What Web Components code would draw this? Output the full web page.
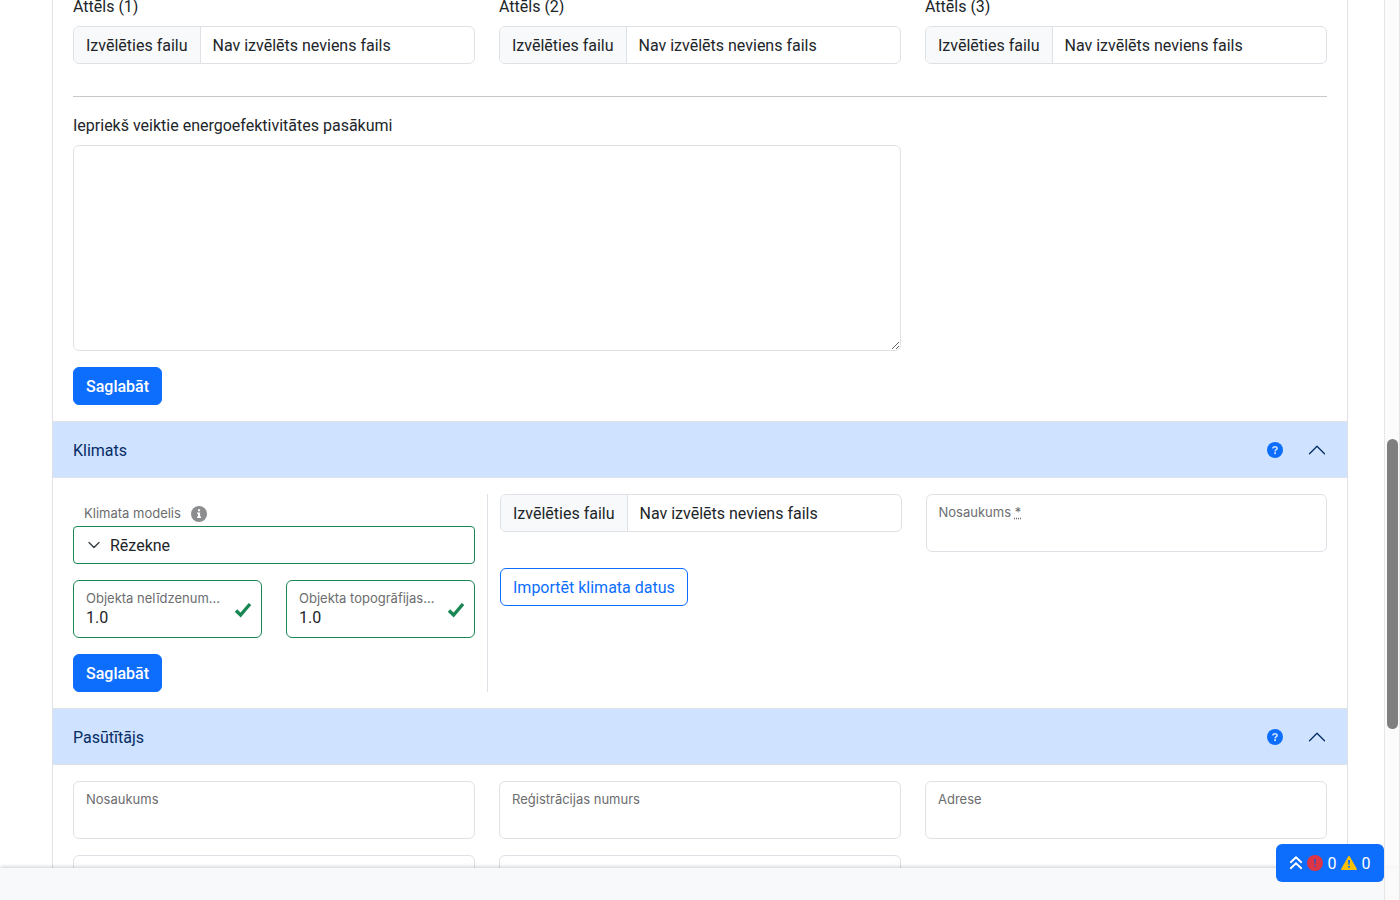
<!DOCTYPE html>
<html lang="lv">
<head>
<meta charset="UTF-8">
<meta name="viewport" content="width=device-width, initial-scale=1">
<title>Objekts</title>
<style>
    :root {
        --primary: #0d6efd;
        --success: #198754;
        --border: #dee2e6;
        --text: #212529;
        --muted: #6c6d6f;
        --small-font: Inter, Roboto, "Liberation Sans", sans-serif;
        --control-padding: 7px 12px 5px;
    }

    html, body {
        height: 100%;
    }

    body {
        margin: 0;
        overflow: hidden;
        color: var(--text);
        background: #fff;
        font: 16px/24px Roboto, "Liberation Sans", sans-serif;
    }
</style>
</head>
<body>
<app-shell>
    <panel-section>
        <form-grid>
            <file-field label="Attēls (1)"></file-field>
            <file-field label="Attēls (2)"></file-field>
            <file-field label="Attēls (3)"></file-field>
        </form-grid>
        <line-break></line-break>
        <form-grid>
            <text-area-field class="wide" label="Iepriekš veiktie energoefektivitātes pasākumi"></text-area-field>
        </form-grid>
        <action-button>Saglabāt</action-button>
    </panel-section>
    <panel-section heading="Klimats">
        <climate-form></climate-form>
    </panel-section>
    <panel-section heading="Pasūtītājs">
        <form-grid>
            <text-field label="Nosaukums"></text-field>
            <text-field label="Reģistrācijas numurs"></text-field>
            <text-field label="Adrese"></text-field>
            <text-field name="contact"></text-field>
            <text-field name="phone"></text-field>
        </form-grid>
    </panel-section>
    <status-button slot="status" errors="0" warnings="0"></status-button>
</app-shell>

<script>
// Shared by every element: open shadow root filled from a template
class BaseElement extends HTMLElement {
    constructor() {
        super();
        this.attachShadow({ mode: 'open' });
    }

    connectedCallback() {
        const template = document.createElement('template');
        template.innerHTML = `<style>* { box-sizing: border-box; }</style>` + this.render();
        this.shadowRoot.replaceChildren(template.content.cloneNode(true));
        this.ready();
    }

    ready() {}
}

class AppShell extends BaseElement {
    render() {
        return `
            <style>
                :host {
                    display: flex;
                    flex-direction: column;
                    height: 100vh;
                }

                main {
                    flex: 1;
                    min-height: 0;
                    overflow-y: auto;
                    scrollbar-width: none;
                }

                .container {
                    max-width: 1320px;
                    margin: 0 auto;
                    padding: 0 12px;
                    box-sizing: border-box;
                }

                .accordion {
                    border: 1px solid var(--border);
                    border-top: 0;
                }

                footer {
                    position: relative;
                    height: 32px;
                    background: #f8f9fa;
                    box-shadow: 0 -1px 4px rgba(0, 0, 0, 0.2);
                }

                .status {
                    position: fixed;
                    right: 16px;
                    bottom: 18px;
                    z-index: 2;
                }

                .track {
                    position: fixed;
                    top: 0;
                    right: 0;
                    bottom: 0;
                    width: 16px;
                    border: solid #e6e6e6;
                    border-width: 0 1px;
                    background: rgba(250, 250, 250, 0.85);
                }

                .thumb {
                    position: absolute;
                    top: 439px;
                    left: 2px;
                    width: 11px;
                    height: 290px;
                    border-radius: 6px;
                    background: #7f7f7f;
                }
            </style>
            <main>
                <div class="container"><div class="accordion"><slot></slot></div></div>
            </main>
            <footer></footer>
            <div class="track"><div class="thumb"></div></div>
            <div class="status"><slot name="status"></slot></div>
        `;
    }

    ready() {
        requestAnimationFrame(() => {
            this.shadowRoot.querySelector('main').scrollTop = 22;
        });
    }
}

class PanelSection extends BaseElement {
    render() {
        const heading = this.getAttribute('heading');
        const header = heading ? `
            <header>
                <button class="title" type="button" aria-expanded="true">${heading}</button>
                <a href="#help" aria-label="Palīdzība">
                    <svg width="16" height="16" viewBox="0 0 16 16">
                        <circle cx="8" cy="8" r="8" fill="#0d6efd"/>
                        <path d="M5.9 6.4C5.9 4.1 10.1 4.1 10.1 6.4C10.1 7.7 8.1 7.6 8.1 9.4" fill="none" stroke="#cfe2ff" stroke-width="1.6"/>
                        <rect x="7.2" y="10.3" width="1.8" height="1.8" fill="#cfe2ff"/>
                    </svg>
                </a>
                <button class="toggle" type="button" aria-label="Sakļaut">
                    <svg width="20" height="20" viewBox="0 0 16 16" fill="none" stroke="#052c65" stroke-linecap="round" stroke-linejoin="round">
                        <path d="M2 11L8 5L14 11"/>
                    </svg>
                </button>
            </header>` : '';
        return `
            <style>
                :host {
                    display: block;
                }

                header {
                    display: flex;
                    align-items: center;
                    gap: 24px;
                    padding: 0 20px;
                    border-top: 1px solid var(--border);
                    background: #cfe2ff;
                    box-shadow: inset 0 -1px 0 var(--border);
                }

                button {
                    padding: 0;
                    border: 0;
                    background: none;
                    color: #052c65;
                    font: inherit;
                    text-align: left;
                    cursor: pointer;
                }

                .title {
                    flex: 1;
                    padding: 17px 0 15px;
                }

                svg {
                    display: block;
                }

                .body {
                    padding: 16px 20px;
                }

                .body[hidden] {
                    display: none;
                }
            </style>
            ${header}
            <div class="body"><slot></slot></div>
        `;
    }

    ready() {
        this.shadowRoot.querySelectorAll('button').forEach((button) => {
            button.addEventListener('click', () => this.toggle());
        });
    }

    toggle() {
        const body = this.shadowRoot.querySelector('.body');
        body.hidden = !body.hidden;
        this.shadowRoot.querySelector('.title').setAttribute('aria-expanded', String(!body.hidden));
    }
}

class FormGrid extends BaseElement {
    render() {
        return `
            <style>
                :host {
                    display: grid;
                    grid-template-columns: repeat(3, minmax(0, 1fr));
                    gap: 16px 24px;
                    margin-bottom: 16px;
                }

                ::slotted(.wide) {
                    grid-column: span 2;
                }
            </style>
            <slot></slot>
        `;
    }
}

class LineBreak extends BaseElement {
    render() {
        return `
            <style>
                :host {
                    display: block;
                    padding: 16px 0;
                }

                hr {
                    margin: 0;
                    border: 0;
                    border-top: 1px solid #c7c8c9;
                }
            </style>
            <hr>
        `;
    }
}

class FileField extends BaseElement {
    render() {
        const label = this.getAttribute('label');
        return `
            <style>
                :host {
                    display: block;
                }

                .caption {
                    display: block;
                    padding: 1px 0 7px;
                }

                .control {
                    position: relative;
                    display: flex;
                    border: 1px solid var(--border);
                    border-radius: 6px;
                    overflow: hidden;
                }

                .control span {
                    padding: var(--control-padding);
                    white-space: nowrap;
                }

                .choose {
                    background: #f8f9fa;
                    border-right: 1px solid var(--border);
                }

                input {
                    position: absolute;
                    inset: 0;
                    width: 100%;
                    opacity: 0;
                    cursor: pointer;
                }
            </style>
            ${label ? `<label class="caption" for="file">${label}</label>` : ''}
            <div class="control">
                <span class="choose">Izvēlēties failu</span>
                <span class="file-name">Nav izvēlēts neviens fails</span>
                <input id="file" type="file" aria-label="${label || 'Klimata dati'}">
            </div>
        `;
    }

    ready() {
        const input = this.shadowRoot.querySelector('input');
        input.addEventListener('change', () => {
            const file = input.files[0];
            this.shadowRoot.querySelector('.file-name').textContent = file ? file.name : 'Nav izvēlēts neviens fails';
        });
    }
}

class TextAreaField extends BaseElement {
    render() {
        return `
            <style>
                :host {
                    display: block;
                }

                label {
                    display: block;
                    padding: 1px 0 7px;
                }

                textarea {
                    display: block;
                    width: 100%;
                    padding: var(--control-padding);
                    border: 1px solid var(--border);
                    border-radius: 6px;
                    color: inherit;
                    font: inherit;
                    resize: vertical;
                }
            </style>
            <label for="text">${this.getAttribute('label')}</label>
            <textarea id="text" rows="8"></textarea>
        `;
    }
}

class TextField extends BaseElement {
    render() {
        const label = this.getAttribute('label') || '';
        const mark = this.hasAttribute('required') ? ' <abbr title="obligāts">*</abbr>' : '';
        const tick = this.hasAttribute('valid') ? `
            <svg width="18" height="18" viewBox="0 0 18 18" fill="none" stroke="#198754" stroke-width="3.4">
                <path d="M2 10.5L6.6 15L16 4"/>
            </svg>` : '';
        return `
            <style>
                :host {
                    display: block;
                }

                .box {
                    display: flex;
                    align-items: center;
                    gap: 12px;
                    padding: 8px 9px 8px 12px;
                    border: 1px solid var(--border);
                    border-radius: 6px;
                }

                :host([valid]) .box {
                    border-color: var(--success);
                }

                .text {
                    flex: 1;
                    min-width: 0;
                }

                label {
                    display: block;
                    height: 18px;
                    overflow: hidden;
                    color: var(--muted);
                    font: 13px/18px var(--small-font);
                    white-space: nowrap;
                }

                input {
                    display: block;
                    width: 100%;
                    height: 22px;
                    padding: 0;
                    border: 0;
                    outline: 0;
                    background: none;
                    color: inherit;
                    font: inherit;
                }

                svg {
                    flex: none;
                }
            </style>
            <div class="box">
                <div class="text">
                    <label for="value">${label}${mark}</label>
                    <input id="value" type="text" value="${this.getAttribute('value') || ''}">
                </div>
                ${tick}
            </div>
        `;
    }
}

class ActionButton extends BaseElement {
    render() {
        return `
            <style>
                :host {
                    display: block;
                }

                button {
                    display: block;
                    padding: var(--control-padding);
                    border: 1px solid var(--primary);
                    border-radius: 6px;
                    background: var(--primary);
                    color: #fff;
                    font: inherit;
                    font-weight: 500;
                    cursor: pointer;
                }

                :host([outline]) button {
                    background: none;
                    color: var(--primary);
                    font-weight: 400;
                }
            </style>
            <button type="button"><slot></slot></button>
        `;
    }
}

class ModelSelect extends BaseElement {
    render() {
        return `
            <style>
                :host {
                    display: block;
                }

                .caption {
                    display: flex;
                    align-items: flex-end;
                    gap: 10px;
                    height: 32px;
                    padding: 0 11px 4px;
                    color: var(--muted);
                    font: 13px/18px var(--small-font);
                }

                .control {
                    position: relative;
                }

                select {
                    display: block;
                    width: 100%;
                    height: 38px;
                    padding: 2px 36px 0;
                    border: 1px solid var(--success);
                    border-radius: 4px;
                    background: #fff;
                    color: inherit;
                    font: inherit;
                    appearance: none;
                }

                .arrow {
                    position: absolute;
                    top: 13px;
                    left: 15px;
                    pointer-events: none;
                }
            </style>
            <div class="caption">
                <label for="model">Klimata modelis</label>
                <svg width="16" height="16" viewBox="0 0 16 16">
                    <circle cx="8" cy="8" r="8" fill="#8c8d8f"/>
                    <path d="M7 3.2H9.1V5.2H7ZM6.1 6.6H9.1V10.6H10V12H6.1V10.6H7V8H6.1Z" fill="#fff"/>
                </svg>
            </div>
            <div class="control">
                <select id="model"><option>Rēzekne</option></select>
                <svg class="arrow" width="12" height="12" viewBox="0 0 12 12" fill="none" stroke="#343a40" stroke-width="1.3" stroke-linecap="round" stroke-linejoin="round">
                    <path d="M1 3.5L6 8.5L11 3.5"/>
                </svg>
            </div>
        `;
    }
}

class ClimateForm extends BaseElement {
    render() {
        return `
            <style>
                :host {
                    display: grid;
                    grid-template-columns: repeat(3, minmax(0, 1fr));
                    column-gap: 24px;
                }

                .model {
                    display: grid;
                    gap: 16px;
                }

                .factors {
                    display: grid;
                    grid-template-columns: repeat(2, minmax(0, 1fr));
                    gap: 24px;
                }

                .import {
                    grid-column: span 2;
                    display: grid;
                    grid-template-columns: repeat(2, minmax(0, 1fr));
                    align-content: start;
                    gap: 16px 24px;
                    margin-left: -12px;
                    padding-left: 12px;
                    border-left: 1px solid var(--border);
                }
            </style>
            <div class="model">
                <model-select></model-select>
                <div class="factors">
                    <text-field valid label="Objekta nelīdzenum…" value="1.0"></text-field>
                    <text-field valid label="Objekta topogrāfijas…" value="1.0"></text-field>
                </div>
                <action-button>Saglabāt</action-button>
            </div>
            <div class="import">
                <file-field></file-field>
                <text-field required label="Nosaukums"></text-field>
                <action-button outline>Importēt klimata datus</action-button>
            </div>
        `;
    }
}

class StatusButton extends BaseElement {
    render() {
        return `
            <style>
                :host {
                    display: block;
                }

                button {
                    display: flex;
                    align-items: center;
                    gap: 4px;
                    padding: 7px 13px;
                    border: 0;
                    border-radius: 6px;
                    background: var(--primary);
                    color: #fff;
                    font: inherit;
                    cursor: pointer;
                }

                span {
                    min-width: 10px;
                    padding-top: 1px;
                    line-height: 23px;
                }
            </style>
            <button type="button">
                <svg width="14" height="16" viewBox="0 0 14 16" fill="none" stroke="#fff" stroke-width="1.9" stroke-linecap="round" stroke-linejoin="round">
                    <path d="M1.8 7.2L7 2.2L12.2 7.2M1.8 13.2L7 8.2L12.2 13.2"/>
                </svg>
                <svg width="16" height="16" viewBox="0 0 16 16">
                    <circle cx="8" cy="8" r="8" fill="#dc3545"/>
                    <path d="M7 4H9L8.7 9H7.3ZM7.1 10.2H8.9V12H7.1Z" fill="#4c4fae"/>
                </svg>
                <span>${this.getAttribute('errors')}</span>
                <svg width="16" height="16" viewBox="0 0 16 16">
                    <path d="M8 1.6L15.2 14.2H0.8Z" fill="#ffc107" stroke="#ffc107" stroke-width="1.4" stroke-linejoin="round"/>
                    <path d="M7 5H9L8.7 9.8H7.3ZM7.1 11H8.9V12.8H7.1Z" fill="#0d6efd"/>
                </svg>
                <span>${this.getAttribute('warnings')}</span>
            </button>
        `;
    }
}

customElements.define('app-shell', AppShell);
customElements.define('panel-section', PanelSection);
customElements.define('form-grid', FormGrid);
customElements.define('line-break', LineBreak);
customElements.define('file-field', FileField);
customElements.define('text-area-field', TextAreaField);
customElements.define('text-field', TextField);
customElements.define('action-button', ActionButton);
customElements.define('model-select', ModelSelect);
customElements.define('climate-form', ClimateForm);
customElements.define('status-button', StatusButton);
</script>
</body>
</html>
